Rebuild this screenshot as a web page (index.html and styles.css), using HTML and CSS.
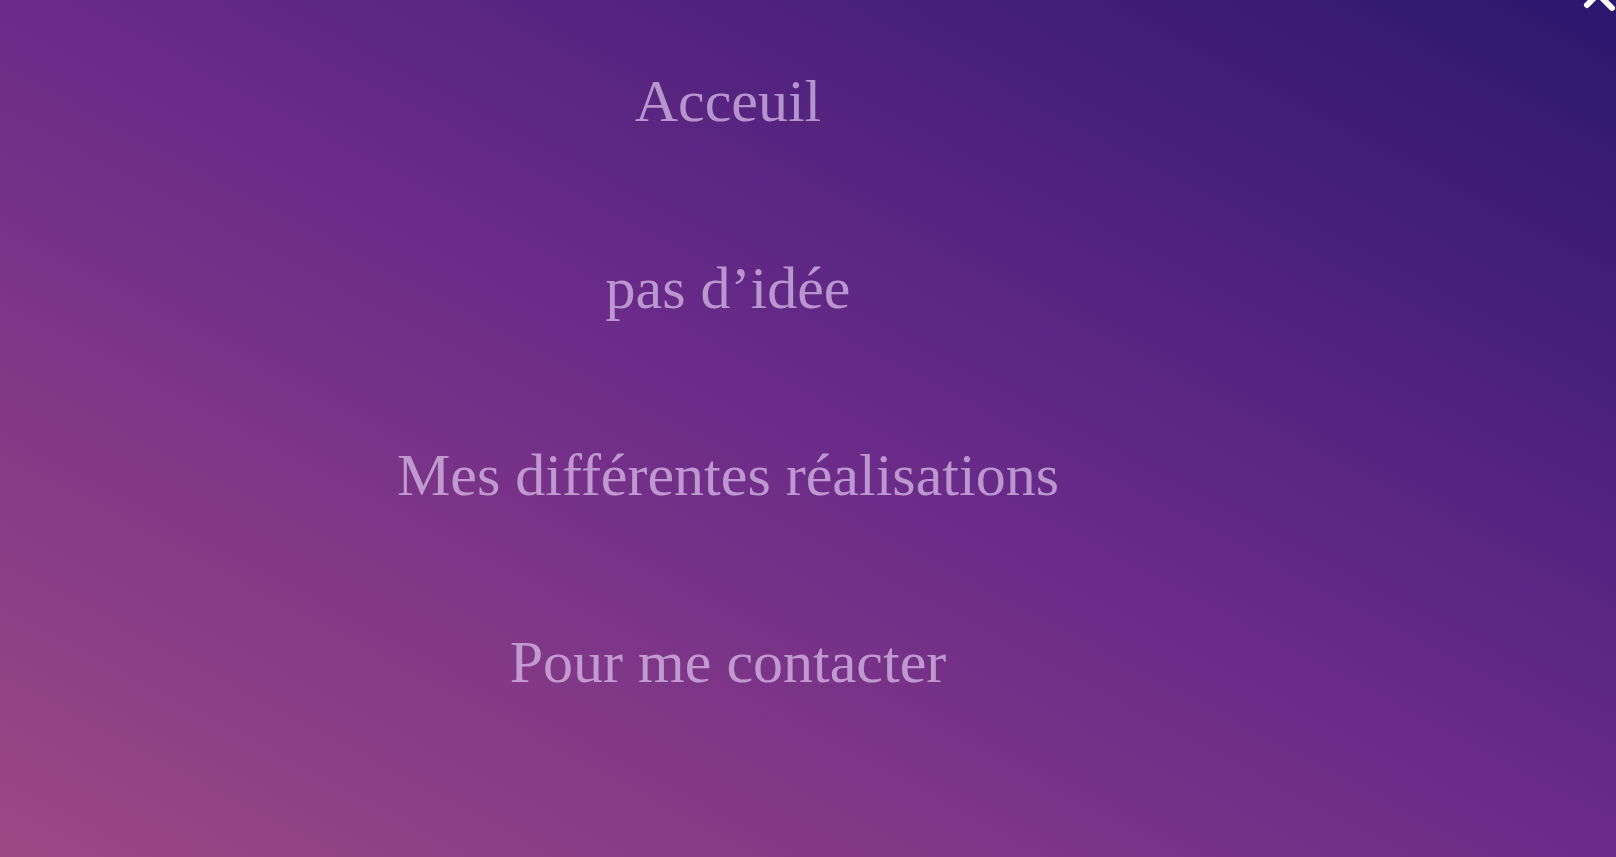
FILE: index.html
```html
<!DOCTYPE html>
<html lang="fr">
<head>
<meta charset="utf-8">
<title>Menu</title>
<link rel="stylesheet" href="styles.css">
</head>
<body>
<nav class="menu">
  <ul class="menu-list">
    <li class="menu-item"><a href="#">Acceuil</a></li>
    <li class="menu-item"><a href="#">pas d’idée</a></li>
    <li class="menu-item"><a href="#">Mes différentes réalisations</a></li>
    <li class="menu-item"><a href="#">Pour me contacter</a></li>
  </ul>
</nav>
<button class="close-btn" aria-label="Fermer">
  <svg viewBox="0 0 40 40" width="40" height="40">
    <path d="M8 8 L34 34 M32 8 L9 31" stroke="#ffffff" stroke-width="6" stroke-linecap="round" fill="none"/>
  </svg>
</button>
</body>
</html>
```
FILE: styles.css
```css
html {
  height: 100%;
  background: linear-gradient(to top right, #9c4884 0%, #6b2b89 50%, #2c176e 100%);
  background-attachment: fixed;
}
body {
  margin: 8px;
  min-height: calc(100% - 16px);
  font-family: "Liberation Serif", "Times New Roman", serif;
  overflow: hidden;
}
.menu {
  width: 90%;
}
.menu-list {
  list-style: none;
  margin: 0;
  padding: 0;
  display: flex;
  flex-direction: column;
}
.menu-item {
  height: 187px;
  display: flex;
  align-items: center;
  justify-content: center;
  font-size: 60px;
}
.menu-item a {
  color: rgba(222, 196, 238, 0.7);
  text-decoration: none;
}
.close-btn {
  position: fixed;
  top: -26px;
  right: -2px;
  width: 40px;
  height: 40px;
  padding: 0;
  border: 0;
  background: none;
}
.close-btn svg {
  display: block;
}
```
